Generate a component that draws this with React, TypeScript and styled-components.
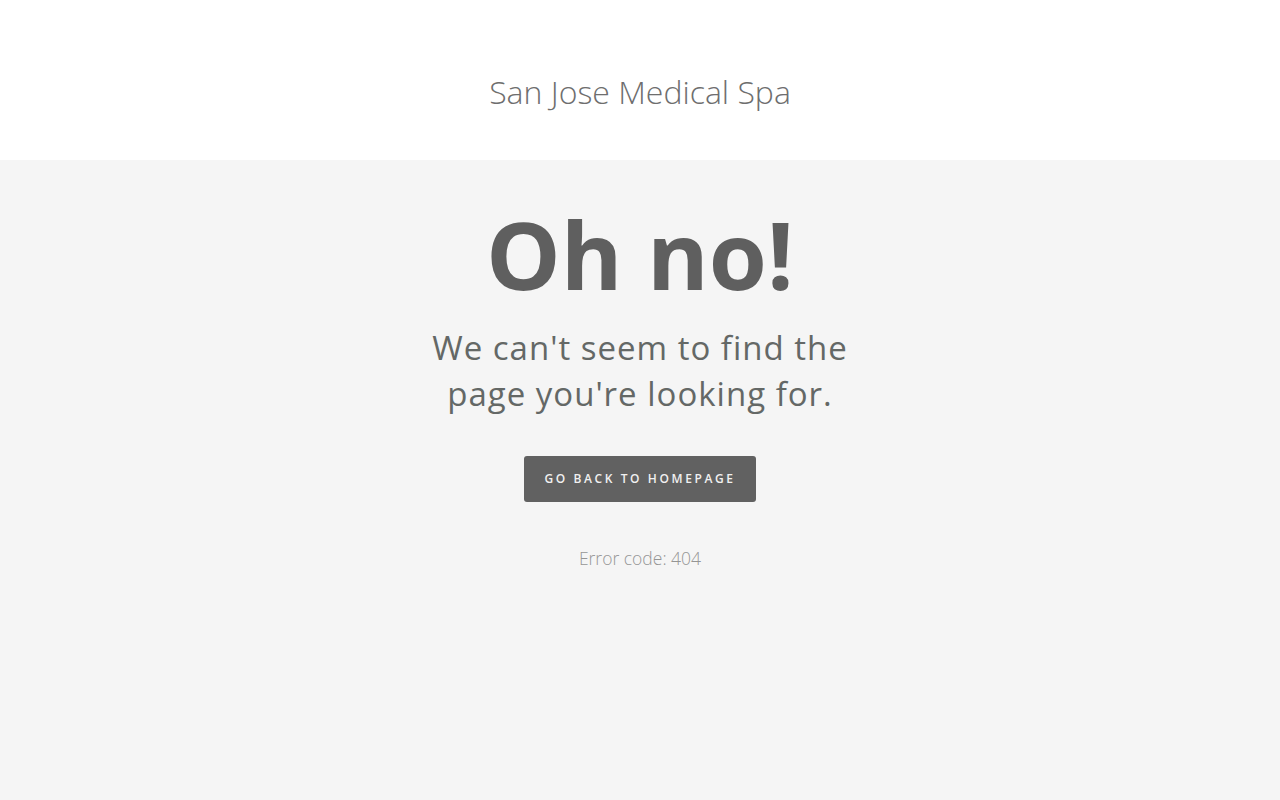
import React from 'react';
import styled, { createGlobalStyle } from 'styled-components';

const GlobalStyle = createGlobalStyle`
  html, body {
    margin: 0;
    padding: 0;
    background: #f5f5f5;
    font-family: 'Open Sans', 'Liberation Sans', sans-serif;
  }
`;

const App = () => {
  return (
    <>
      <GlobalStyle />
      <Header>
        <SiteTitle>San Jose Medical Spa</SiteTitle>
      </Header>
      <Main>
        <Headline>Oh no!</Headline>
        <Message>
          We can't seem to find the
          <br />
          page you're looking for.
        </Message>
        <HomeButton href='#'>Go back to homepage</HomeButton>
        <ErrorCode>Error code: 404</ErrorCode>
      </Main>
    </>
  );
};

export default App;

const Header = styled.header`
  height: 160px;
  box-sizing: border-box;
  padding-top: 22px;
  background: #fff;
  display: flex;
  align-items: center;
  justify-content: center;
`;

const SiteTitle = styled.h1`
  margin: 0;
  font-size: 32px;
  font-weight: 300;
  color: #6e6e6e;
`;

const Main = styled.main`
  min-height: 640px;
  background: #f5f5f5;
  display: flex;
  flex-direction: column;
  align-items: center;
  text-align: center;
`;

const Headline = styled.h2`
  margin: 38px 0 0;
  font-size: 94px;
  font-weight: 700;
  line-height: 1.2;
  color: #5f5f5f;
`;

const Message = styled.p`
  margin: 14px 0 0;
  font-size: 33px;
  font-weight: 400;
  line-height: 46px;
  letter-spacing: 1px;
  color: #646866;
`;

const HomeButton = styled.a`
  margin-top: 39px;
  width: 232px;
  height: 46px;
  box-sizing: border-box;
  display: flex;
  align-items: center;
  justify-content: center;
  background: #616161;
  border-radius: 3px;
  color: #f0f0f0;
  font-size: 12px;
  font-weight: 600;
  letter-spacing: 2.6px;
  text-transform: uppercase;
  text-decoration: none;
`;

const ErrorCode = styled.p`
  margin: 44px 0 0;
  font-size: 17.5px;
  font-weight: 300;
  color: #959595;
`;
